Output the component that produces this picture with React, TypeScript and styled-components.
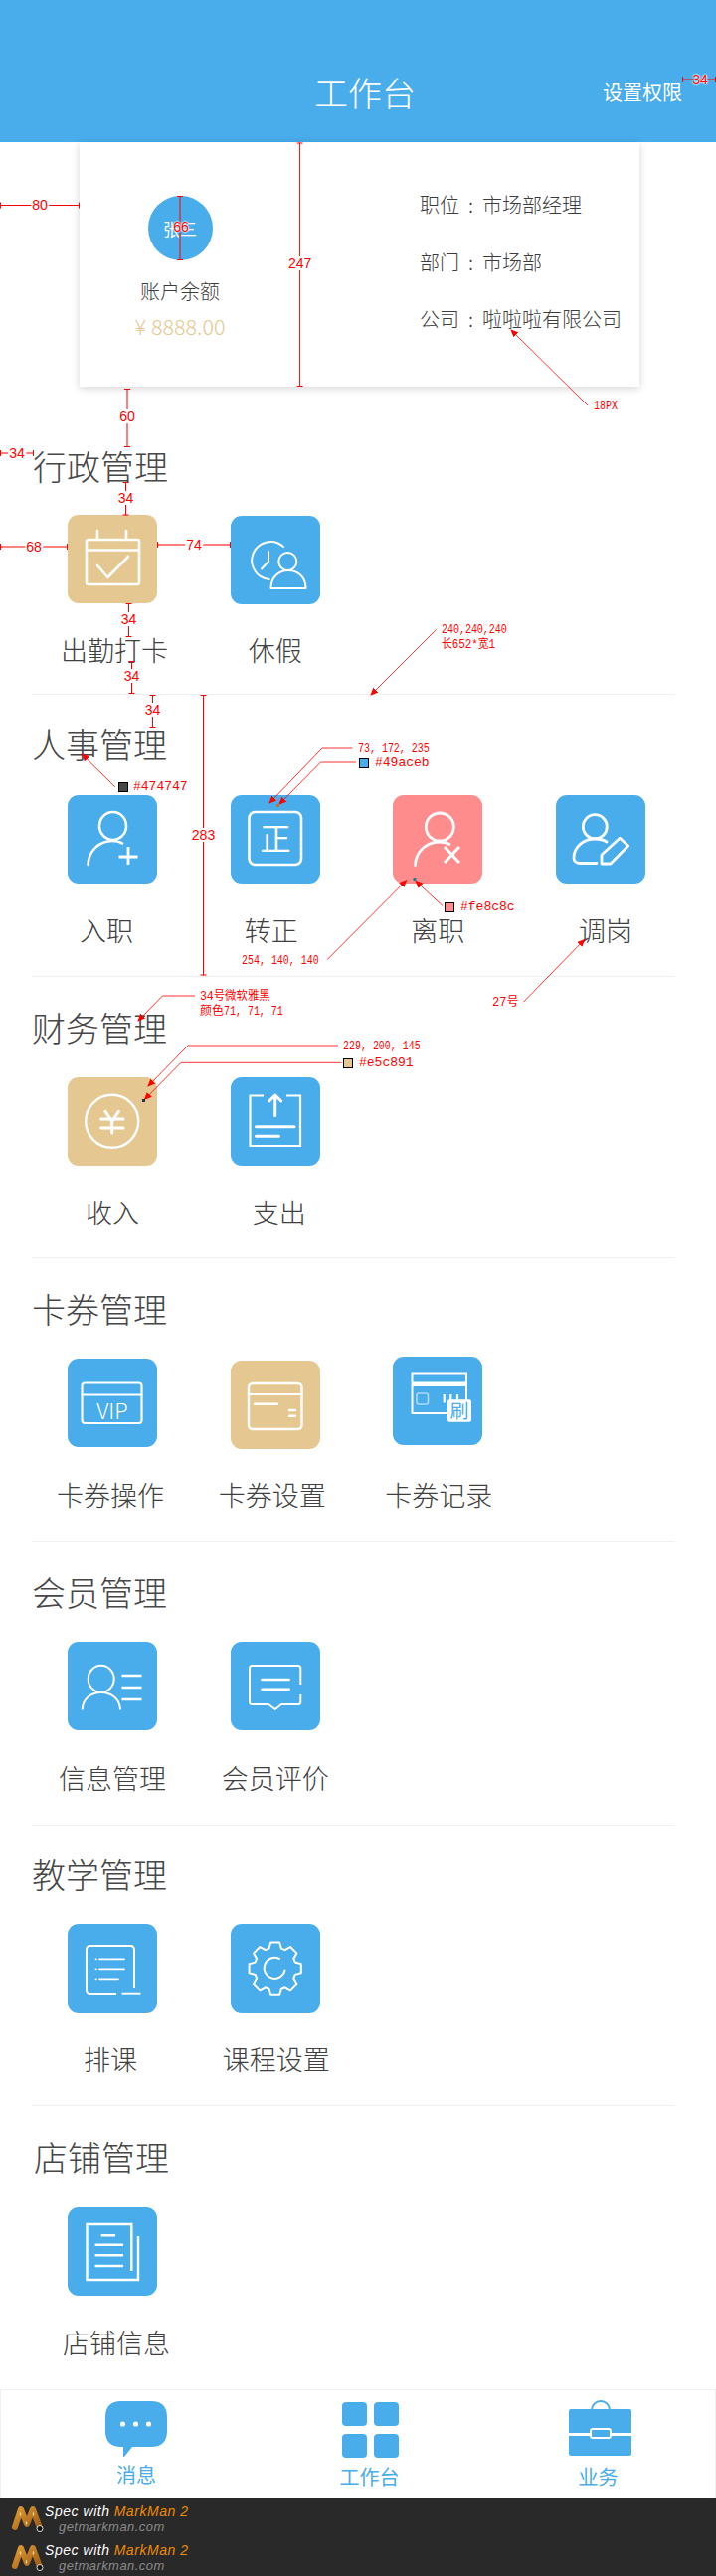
import React from "react";
import styled, { createGlobalStyle } from "styled-components";

const BLUE = "#49aceb";
const TAN = "#e5c891";
const PINK = "#fe8c8c";
const INK = "#474747";
const RED = "#ff0000";
const CJK = `"Noto Sans CJK SC", "Noto Sans", sans-serif`;

const GlobalStyle = createGlobalStyle`
  html, body { margin: 0; padding: 0; background: #fff; }
  body { font-family: ${CJK}; color: ${INK}; }
`;

const Page = styled.div`
  position: relative;
  width: 720px;
  height: 2592px;
  overflow: hidden;
  background: #fff;
`;

const Header = styled.header`
  box-sizing: border-box;
  display: flex;
  align-items: flex-end;
  height: 143px;
  padding: 0 34px 33px 316px;
  background: ${BLUE};
  color: #fff;
`;
const HeaderTitle = styled.h1`
  margin: 0;
  font-size: 34px;
  font-weight: 300;
  line-height: 34px;
`;
const HeaderAction = styled.span`
  margin-left: auto;
  font-size: 20px;
  font-weight: 400;
  line-height: 34px;
`;

const Card = styled.section`
  box-sizing: border-box;
  display: flex;
  width: 563px;
  height: 246px;
  margin-left: 80px;
  background: #fff;
  box-shadow: 0 2px 8px rgba(0, 0, 0, 0.16);
`;
const CardLeft = styled.div`
  display: flex;
  flex-direction: column;
  align-items: center;
  width: 202px;
  padding-top: 54px;
`;
const Avatar = styled.div`
  display: flex;
  align-items: center;
  justify-content: center;
  width: 65px;
  height: 65px;
  border-radius: 50%;
  background: ${BLUE};
  color: #fff;
  font-size: 17px;
`;
const BalanceLabel = styled.div`
  margin-top: 19px;
  color: #3c3c3c;
  font-size: 20px;
  font-weight: 300;
  line-height: 24px;
`;
const Amount = styled.div`
  margin-top: 9px;
  color: ${TAN};
  font-size: 21.5px;
  font-weight: 300;
  line-height: 28px;
`;
const AmountSign = styled.span`
  margin-right: 5px;
`;
const CardRight = styled.div`
  display: flex;
  flex-direction: column;
  gap: 33.5px;
  padding: 51px 0 0 140px;
`;
const InfoRow = styled.div`
  color: #3c3c3c;
  font-size: 20px;
  font-weight: 300;
  line-height: 24px;
  white-space: nowrap;
`;
const Colon = styled.span`
  margin: 0 9px;
`;

const Section = styled.section<{ $height: number; $last?: boolean }>`
  box-sizing: border-box;
  width: 647px;
  height: ${(p) => p.$height}px;
  margin-left: 32px;
  border-bottom: ${(p) => (p.$last ? "0" : "1px solid #f0f0f0")};
`;
const SectionTitle = styled.h2<{ $top: number; $indent: number }>`
  margin: 0;
  padding: ${(p) => p.$top}px 0 0 ${(p) => p.$indent}px;
  font-size: 34px;
  font-weight: 300;
  line-height: 34px;
`;
const TileGrid = styled.div<{ $gap: number }>`
  display: grid;
  grid-template-columns: repeat(4, 150px);
  column-gap: 13.67px;
  margin-top: ${(p) => p.$gap}px;
  padding-left: 6px;
`;
const Tile = styled.div`
  display: flex;
  flex-direction: column;
  align-items: center;
`;
const IconBox = styled.div<{ $color: string; $shift: number }>`
  width: 90px;
  height: 89px;
  margin: ${(p) => p.$shift}px 0 ${(p) => -p.$shift}px;
  border-radius: 11px;
  background: ${(p) => p.$color};
`;
const TileLabel = styled.div<{ $gap: number; $nudge: number }>`
  margin-top: ${(p) => p.$gap}px;
  margin-left: ${(p) => p.$nudge * 2}px;
  color: #404040;
  font-size: 27px;
  font-weight: 300;
  line-height: 40px;
  white-space: nowrap;
`;
const IconSvg = styled.svg`
  display: block;
  fill: none;
  stroke: #fff;
  stroke-linecap: round;
  stroke-linejoin: round;
`;

const TabBar = styled.nav`
  box-sizing: border-box;
  display: flex;
  height: 110px;
  padding-left: 105px;
  border: 1px solid #f0f0f0;
  border-bottom: 0;
`;
const Tab = styled.div<{ $width: number; $gap: number; $top: number }>`
  display: flex;
  flex-direction: column;
  align-items: center;
  width: ${(p) => p.$width}px;
  margin-left: ${(p) => p.$gap}px;
  padding-top: ${(p) => p.$top}px;
`;
const TabLabel = styled.span<{ $gap: number; $nudge: number }>`
  margin-top: ${(p) => p.$gap}px;
  margin-left: ${(p) => p.$nudge * 2}px;
  color: ${BLUE};
  font-size: 20px;
  line-height: 24px;
  white-space: nowrap;
`;

const Footer = styled.footer`
  height: 78px;
  background: #292929;
`;
const Stamp = styled.div`
  display: flex;
  align-items: flex-start;
  height: 39px;
  padding: 7px 0 0 11px;
  box-sizing: border-box;
`;
const StampText = styled.div`
  margin-left: 1px;
  font-family: "Liberation Sans", sans-serif;
  font-style: italic;
`;
const StampTitle = styled.div`
  color: #fff;
  font-size: 14px;
  letter-spacing: 0.55px;
  line-height: 12px;
  white-space: nowrap;
`;
const StampBrand = styled.span`
  margin-left: 4px;
  color: #f08c00;
`;
const StampUrl = styled.div`
  margin: 3px 0 0 14px;
  color: #8a8a8a;
  font-size: 13px;
  letter-spacing: 0.45px;
  line-height: 13px;
`;

const Overlay = styled.div`
  position: absolute;
  inset: 0;
  pointer-events: none;
`;
const OverlaySvg = styled.svg`
  position: absolute;
  top: 0;
  left: 0;
`;
const DimLabel = styled.span<{ $x: number; $y: number; $halo?: boolean }>`
  position: absolute;
  left: ${(p) => p.$x}px;
  top: ${(p) => p.$y}px;
  transform: translate(-50%, -50%);
  padding: 0 1px;
  background: ${(p) => (p.$halo ? "transparent" : "#fff")};
  color: ${RED};
  font-family: "Liberation Sans", sans-serif;
  font-size: 14px;
  line-height: 14px;
  text-shadow: ${(p) => (p.$halo ? "0 0 2px #fff, 0 0 2px #fff, 0 0 2px #fff" : "none")};
`;
const Note = styled.span<{ $x: number; $y: number; $size: number; $squeeze: number }>`
  position: absolute;
  left: ${(p) => p.$x}px;
  top: ${(p) => p.$y}px;
  transform: translateY(-50%) scaleX(${(p) => p.$squeeze});
  transform-origin: left center;
  color: ${RED};
  font-family: "Liberation Mono", "Noto Sans CJK SC", monospace;
  font-size: ${(p) => p.$size}px;
  line-height: 14px;
  white-space: nowrap;
`;
const Swatch = styled.i<{ $x: number; $y: number; $color: string }>`
  position: absolute;
  left: ${(p) => p.$x}px;
  top: ${(p) => p.$y}px;
  box-sizing: border-box;
  width: 10px;
  height: 10px;
  border: 1px solid #000;
  background: ${(p) => p.$color};
`;

const gearPath = (() => {
  const cx = 44.7;
  const cy = 44.7;
  const pts: string[] = [];
  for (let i = 0; i < 8; i++) {
    const a = (i * Math.PI) / 4 - Math.PI / 2;
    const at = (r: number, d: number) =>
      `${(cx + r * Math.cos(a + d)).toFixed(2)} ${(cy + r * Math.sin(a + d)).toFixed(2)}`;
    pts.push(at(21, -0.3), at(26.5, -0.17), at(26.5, 0.17), at(21, 0.3));
  }
  return `M${pts.join("L")}Z`;
})();

const icons: Record<string, React.ReactNode> = {
  calendar: (
    <>
      <rect x="19" y="25" width="53" height="45" rx="2" strokeWidth="2.6" />
      <path d="M30 16v9M59 16v9M19 35.5h53" strokeWidth="2.6" />
      <path d="M30 51l10.3 12L61 42" strokeWidth="2.6" />
    </>
  ),
  leave: (
    <>
      <path d="M53 31A19 19 0 1 0 38.7 64" strokeWidth="2" />
      <path d="M38 36v10l-7 7.5" strokeWidth="2" />
      <circle cx="57.3" cy="46" r="9" strokeWidth="2" />
      <path d="M40.5 73C40.5 61 49 55 58 55s17.5 6 17.5 18Z" strokeWidth="2" />
    </>
  ),
  userAdd: (
    <>
      <ellipse cx="45.5" cy="31" rx="13.5" ry="14" strokeWidth="2.6" />
      <path d="M20.6 70C21 55 33 46 45 46c4 0 7 .6 10 2.5" strokeWidth="2.6" />
      <path d="M51.5 62h19M61 52v18" strokeWidth="2.8" strokeLinecap="butt" />
    </>
  ),
  regular: (
    <>
      <rect x="18.5" y="17" width="52.5" height="53" rx="6" strokeWidth="2.6" />
      <text x="45" y="55" fill="#fff" stroke="none" fontSize="31" textAnchor="middle" fontFamily={CJK}>
        正
      </text>
    </>
  ),
  userOff: (
    <>
      <ellipse cx="47.3" cy="32" rx="14" ry="14" strokeWidth="2.8" />
      <path d="M22.5 70.5C23 56 35 47 47 47c4 0 7 .6 10 2.5" strokeWidth="2.8" />
      <path d="M52 52l15 16M67 52L52 68" strokeWidth="3" strokeLinecap="butt" />
    </>
  ),
  userEdit: (
    <>
      <circle cx="39.3" cy="31.7" r="12" strokeWidth="2.8" />
      <path d="M41 68.5H24c-4 0-6-2.5-6-5.5 0-11 10-19 21-19 5 0 9 1 12 3" strokeWidth="2.8" />
      <path d="M46 69v-9l18.3-16.7 8.4 7.7L55 69Z" strokeWidth="2.8" />
    </>
  ),
  yuan: (
    <>
      <circle cx="44.7" cy="44.3" r="26.5" strokeWidth="2.4" />
      <path d="M38 34.3l6.7 10 6.6-10M33.7 42h22.3M33.7 51h22.3M44.7 43.5V56" strokeWidth="3" />
    </>
  ),
  expense: (
    <>
      <path d="M33 18.5H19.5V69H70V18.5H56" strokeWidth="2.2" strokeLinecap="butt" strokeLinejoin="miter" />
      <path d="M44.7 18v20.5M38.7 24l6-6 6 6M25.5 49.7H64M25.5 59.3h23" strokeWidth="3" />
    </>
  ),
  vip: (
    <>
      <rect x="14.5" y="24.5" width="60" height="40.5" rx="3" strokeWidth="2.2" />
      <path d="M14.5 36.5h60" strokeWidth="2.2" />
      <text x="45" y="60.5" fill="#fff" stroke="none" fontSize="22" fontWeight="300" textAnchor="middle" fontFamily={CJK}>
        VIP
      </text>
    </>
  ),
  cardSet: (
    <>
      <rect x="18" y="23" width="53.5" height="46" rx="4" strokeWidth="2.4" />
      <path d="M18 34h53.5" strokeWidth="2.2" />
      <path d="M24 43.7h23M59 50h6M59 55.7h6" strokeWidth="2.4" />
    </>
  ),
  cardLog: (
    <>
      <path d="M55 57H19.5V17.5H74V44" strokeWidth="2" strokeLinecap="butt" strokeLinejoin="miter" />
      <path d="M19.5 27.8H74" strokeWidth="4.4" strokeLinecap="butt" />
      <rect x="24" y="37" width="11.5" height="11" rx="2" strokeWidth="1.6" opacity="0.55" />
      <path d="M51.7 38v8.5M58.3 38v8.5M65 38v6" strokeWidth="2.2" strokeLinecap="butt" />
      <rect x="55" y="43.3" width="24" height="22.4" rx="2" fill="#fff" stroke="none" />
      <text x="67" y="61.5" fill={BLUE} stroke="none" fontSize="19" textAnchor="middle" fontFamily={CJK}>
        刷
      </text>
    </>
  ),
  members: (
    <>
      <ellipse cx="33.7" cy="37.3" rx="13" ry="13.5" strokeWidth="2" />
      <path d="M14.7 68.5C15 58 23 51 33.7 51S52.7 58 53 68.5" strokeWidth="2" strokeLinecap="butt" />
      <path d="M54.5 34h20M54.5 46h20M54.5 58h20" strokeWidth="2.4" strokeLinecap="butt" />
    </>
  ),
  review: (
    <>
      <path d="M70.3 43V26.5q0-2.5-2.5-2.5H21.5q-2.5 0-2.5 2.5V60.5q0 2.5 2.5 2.5H38l6.7 5 6.3-5h16.8q2.5 0 2.5-2.5V53" strokeWidth="2" strokeLinecap="butt" />
      <path d="M31.3 38h27.4M31.3 47.7h27.4" strokeWidth="2.4" />
    </>
  ),
  schedule: (
    <>
      <path d="M67 64V26q0-4-4-4H23q-4 0-4 4v40q0 4 4 4h26" strokeWidth="1.9" strokeLinecap="butt" />
      <path d="M54.5 69.7H73.5" strokeWidth="1.9" strokeLinecap="butt" />
      <path d="M32 35.3h25M32 45.3h25M32 55.3h19" strokeWidth="1.8" />
      <path d="M28.5 35.3h.4M28.5 45.3h.4M28.5 55.3h.4" strokeWidth="1.8" />
    </>
  ),
  gear: (
    <>
      <path d={gearPath} strokeWidth="2" />
      <path d="M54.5 46.5A10.5 10.5 0 1 1 49 35" strokeWidth="2" />
    </>
  ),
  store: (
    <>
      <path d="M64.3 64V17H19.5V73H71V29" strokeWidth="2.4" strokeLinecap="butt" strokeLinejoin="miter" />
      <path d="M34.7 28.3H47M28.7 37.7H55M28.7 48.3H55M28.7 59H55" strokeWidth="2.6" />
    </>
  ),
};

type TileData = { label: string; icon: string; color: string; shift?: number; nudge?: number };
type SectionData = {
  title: string;
  height: number;
  center: number;
  iconTop: number;
  labelCenter: number;
  indent: number;
  tiles: TileData[];
};

const sections: SectionData[] = [
  {
    title: "行政管理",
    height: 310,
    center: 79.6,
    iconTop: 129,
    labelCenter: 264.6,
    indent: 1,
    tiles: [
      { label: "出勤打卡", icon: "calendar", color: TAN, nudge: 2 },
      { label: "休假", icon: "leave", color: BLUE, shift: 1 },
    ],
  },
  {
    title: "人事管理",
    height: 284,
    center: 50,
    iconTop: 101,
    labelCenter: 237.4,
    indent: 0,
    tiles: [
      { label: "入职", icon: "userAdd", color: BLUE, nudge: -6 },
      { label: "转正", icon: "regular", color: BLUE, nudge: -4 },
      { label: "离职", icon: "userOff", color: PINK },
      { label: "调岗", icon: "userEdit", color: BLUE, nudge: 5 },
    ],
  },
  {
    title: "财务管理",
    height: 283,
    center: 51,
    iconTop: 101,
    labelCenter: 236.6,
    indent: 0,
    tiles: [
      { label: "收入", icon: "yuan", color: TAN },
      { label: "支出", icon: "expense", color: BLUE, nudge: 4 },
    ],
  },
  {
    title: "卡券管理",
    height: 286,
    center: 51,
    iconTop: 101,
    labelCenter: 238,
    indent: 0,
    tiles: [
      { label: "卡券操作", icon: "vip", color: BLUE, nudge: -2 },
      { label: "卡券设置", icon: "cardSet", color: TAN, shift: 2, nudge: -3 },
      { label: "卡券记录", icon: "cardLog", color: BLUE, shift: -2, nudge: 1 },
    ],
  },
  {
    title: "会员管理",
    height: 285,
    center: 50,
    iconTop: 100,
    labelCenter: 237,
    indent: 0,
    tiles: [
      { label: "信息管理", icon: "members", color: BLUE },
      { label: "会员评价", icon: "review", color: BLUE },
    ],
  },
  {
    title: "教学管理",
    height: 282,
    center: 49,
    iconTop: 99,
    labelCenter: 235,
    indent: 0,
    tiles: [
      { label: "排课", icon: "schedule", color: BLUE, nudge: -2 },
      { label: "课程设置", icon: "gear", color: BLUE, nudge: 1 },
    ],
  },
  {
    title: "店铺管理",
    height: 285,
    center: 51,
    iconTop: 102,
    labelCenter: 237.7,
    indent: 2,
    tiles: [{ label: "店铺信息", icon: "store", color: BLUE, nudge: 4 }],
  },
];

const hDims: [number, number, number][] = [
  [80, 686, 720],
  [206.5, 0, 80],
  [456, 0, 34],
  [550, 0, 68],
  [548, 158, 232],
];
const vDims: [number, number, number][] = [
  [181, 197, 262],
  [301.6, 143.5, 389],
  [128, 391, 450],
  [126.5, 485, 518.5],
  [129.5, 607, 641],
  [132.5, 665, 698],
  [153.5, 699, 733],
  [204.5, 699, 981.5],
];
const dimLabels: [string, number, number, boolean?][] = [
  ["34", 704, 80, true],
  ["80", 40, 206],
  ["66", 182, 228, true],
  ["247", 301.6, 265],
  ["60", 128, 419],
  ["34", 17, 456],
  ["34", 126.5, 500.7],
  ["68", 34, 550],
  ["74", 195, 548],
  ["34", 129.5, 622.5],
  ["34", 132.5, 680],
  ["34", 153.5, 714],
  ["283", 204.5, 839.6],
];
const leaders: string[] = [
  "591 408 514 332",
  "438.5 633.6 373 699",
  "115.7 791.8 82.6 759",
  "354.5 753 324 753 271 808",
  "358 767 322.5 767 281 809",
  "445 911.4 418 886.5",
  "329 965.7 408.6 885.7",
  "526.6 1008 587.7 945.4",
  "196 1002 163.5 1002 139 1027",
  "340 1052 189 1052 149 1093",
  "343.5 1069.3 182 1069.3 145.5 1106.4",
];
const notes: [string, number, number, number, number][] = [
  ["18PX", 597, 409, 12, 0.83],
  ["240,240,240", 443.5, 634, 12, 0.83],
  ["长652*宽1", 444, 649, 12, 0.9],
  ["#474747", 134, 792, 13, 1],
  ["73, 172, 235", 360, 754, 12, 0.83],
  ["#49aceb", 377, 767.5, 13, 1],
  ["#fe8c8c", 463, 912.5, 13, 1],
  ["254, 140, 140", 243, 967, 12, 0.83],
  ["27号", 495, 1009, 12, 1],
  ["34号微软雅黑", 201, 1003, 12, 0.95],
  ["颜色", 201, 1018, 12, 1],
  ["71, 71, 71", 225, 1018, 12, 0.83],
  ["229, 200, 145", 345, 1053, 12, 0.83],
  ["#e5c891", 361, 1070, 13, 1],
];

const Annotations = () => (
  <Overlay>
    <OverlaySvg width="720" height="2592" viewBox="0 0 720 2592" fill="none">
      <defs>
        <marker id="tip" markerWidth="8" markerHeight="8" refX="7" refY="3.5" orient="auto" markerUnits="userSpaceOnUse">
          <path d="M0 0L8 3.5L0 7Z" fill={RED} />
        </marker>
      </defs>
      {hDims.map(([y, a, b], i) => (
        <path key={i} d={`M${a} ${y}H${b}M${a + 0.5} ${y - 3}v6M${b - 0.5} ${y - 3}v6`} stroke={RED} strokeWidth="1" />
      ))}
      {vDims.map(([x, a, b], i) => (
        <path key={i} d={`M${x} ${a}V${b}M${x - 3} ${a + 0.5}h6M${x - 3} ${b - 0.5}h6`} stroke={RED} strokeWidth="1" />
      ))}
      {leaders.map((pts, i) => (
        <polyline key={i} points={pts} stroke={RED} strokeWidth="0.8" markerEnd="url(#tip)" />
      ))}
      <rect x="278" y="809" width="3" height="3" fill="#c9702a" />
      <rect x="415.5" y="883" width="3" height="3" fill="#1f7f8a" />
      <rect x="143" y="1106" width="3" height="3" fill="#26324f" />
    </OverlaySvg>
    {dimLabels.map(([t, x, y, halo], i) => (
      <DimLabel key={i} $x={x} $y={y} $halo={halo}>
        {t}
      </DimLabel>
    ))}
    {notes.map(([t, x, y, s, q], i) => (
      <Note key={i} $x={x} $y={y} $size={s} $squeeze={q}>
        {t}
      </Note>
    ))}
    <Swatch $x={118.5} $y={787} $color={INK} />
    <Swatch $x={361} $y={762.5} $color={BLUE} />
    <Swatch $x={447} $y={908} $color={PINK} />
    <Swatch $x={345} $y={1065} $color={TAN} />
  </Overlay>
);

const MarkLogo = () => (
  <svg width="33" height="27" viewBox="0 0 33 27" fill="none">
    <defs>
      <linearGradient id="wood" x1="0" y1="0" x2="1" y2="1">
        <stop offset="0" stopColor="#e09a33" />
        <stop offset="1" stopColor="#9a5a12" />
      </linearGradient>
    </defs>
    <path d="M4 22L10 4l6 15 6-15 7 19" stroke="url(#wood)" strokeWidth="6" strokeLinecap="round" strokeLinejoin="round" />
    <path d="M9.5 8v2M15.5 17v2M22.5 8v2" stroke="#f4d59a" strokeWidth="1.4" strokeLinecap="round" />
    <circle cx="29" cy="23.5" r="3" fill="#111" stroke="#ddd" strokeWidth="1" />
  </svg>
);

const StampRow = () => (
  <Stamp>
    <MarkLogo />
    <StampText>
      <StampTitle>
        Spec with<StampBrand>MarkMan 2</StampBrand>
      </StampTitle>
      <StampUrl>getmarkman.com</StampUrl>
    </StampText>
  </Stamp>
);

const App = () => (
  <Page>
    <GlobalStyle />
    <Header>
      <HeaderTitle>工作台</HeaderTitle>
      <HeaderAction>设置权限</HeaderAction>
    </Header>

    <Card>
      <CardLeft>
        <Avatar>张三</Avatar>
        <BalanceLabel>账户余额</BalanceLabel>
        <Amount>
          <AmountSign>¥</AmountSign>8888.00
        </Amount>
      </CardLeft>
      <CardRight>
        <InfoRow>
          职位<Colon>:</Colon>市场部经理
        </InfoRow>
        <InfoRow>
          部门<Colon>:</Colon>市场部
        </InfoRow>
        <InfoRow>
          公司<Colon>:</Colon>啦啦啦有限公司
        </InfoRow>
      </CardRight>
    </Card>

    {sections.map((s, i) => (
      <Section key={s.title} $height={s.height} $last={i === sections.length - 1}>
        <SectionTitle $top={s.center - 17} $indent={s.indent}>
          {s.title}
        </SectionTitle>
        <TileGrid $gap={s.iconTop - s.center - 17}>
          {s.tiles.map((t) => (
            <Tile key={t.label}>
              <IconBox $color={t.color} $shift={t.shift ?? 0}>
                <IconSvg width="90" height="89" viewBox="0 0 90 89">
                  {icons[t.icon]}
                </IconSvg>
              </IconBox>
              <TileLabel $gap={s.labelCenter - 20 - s.iconTop - 89} $nudge={t.nudge ?? 0}>
                {t.label}
              </TileLabel>
            </Tile>
          ))}
        </TileGrid>
      </Section>
    ))}

    <TabBar>
      <Tab $width={62} $gap={0} $top={11}>
        <svg width="62" height="56" viewBox="0 0 62 56">
          <path d="M16 0H46Q62 0 62 16V30Q62 46 46 46H27L19 56Q18 57 18 55V46H16Q0 46 0 30V16Q0 0 16 0Z" fill={BLUE} />
          <circle cx="17.5" cy="23" r="2.6" fill="#fff" />
          <circle cx="30.5" cy="23" r="2.6" fill="#fff" />
          <circle cx="43.5" cy="23" r="2.6" fill="#fff" />
        </svg>
        <TabLabel $gap={6} $nudge={0}>
          消息
        </TabLabel>
      </Tab>
      <Tab $width={57} $gap={176} $top={12}>
        <svg width="57" height="56" viewBox="0 0 57 56">
          <rect x="0" y="0" width="25" height="24" rx="4" fill={BLUE} />
          <rect x="32" y="0" width="25" height="24" rx="4" fill={BLUE} />
          <rect x="0" y="32" width="25" height="24" rx="4" fill={BLUE} />
          <rect x="32" y="32" width="25" height="24" rx="4" fill={BLUE} />
        </svg>
        <TabLabel $gap={7} $nudge={-1}>
          工作台
        </TabLabel>
      </Tab>
      <Tab $width={63} $gap={171} $top={10}>
        <svg width="63" height="56" viewBox="0 0 63 56">
          <path d="M23 10a9 9 0 0 1 18 0" fill="none" stroke={BLUE} strokeWidth="2" />
          <path d="M0 11a2 2 0 0 1 2-2h59a2 2 0 0 1 2 2v22H0Z" fill={BLUE} />
          <path d="M0 36h63v18a2 2 0 0 1-2 2H2a2 2 0 0 1-2-2Z" fill={BLUE} />
          <rect x="22" y="29" width="20" height="9" rx="2" fill={BLUE} stroke="#fff" strokeWidth="2" />
        </svg>
        <TabLabel $gap={9} $nudge={-2}>
          业务
        </TabLabel>
      </Tab>
    </TabBar>

    <Footer>
      <StampRow />
      <StampRow />
    </Footer>

    <Annotations />
  </Page>
);

export default App;
